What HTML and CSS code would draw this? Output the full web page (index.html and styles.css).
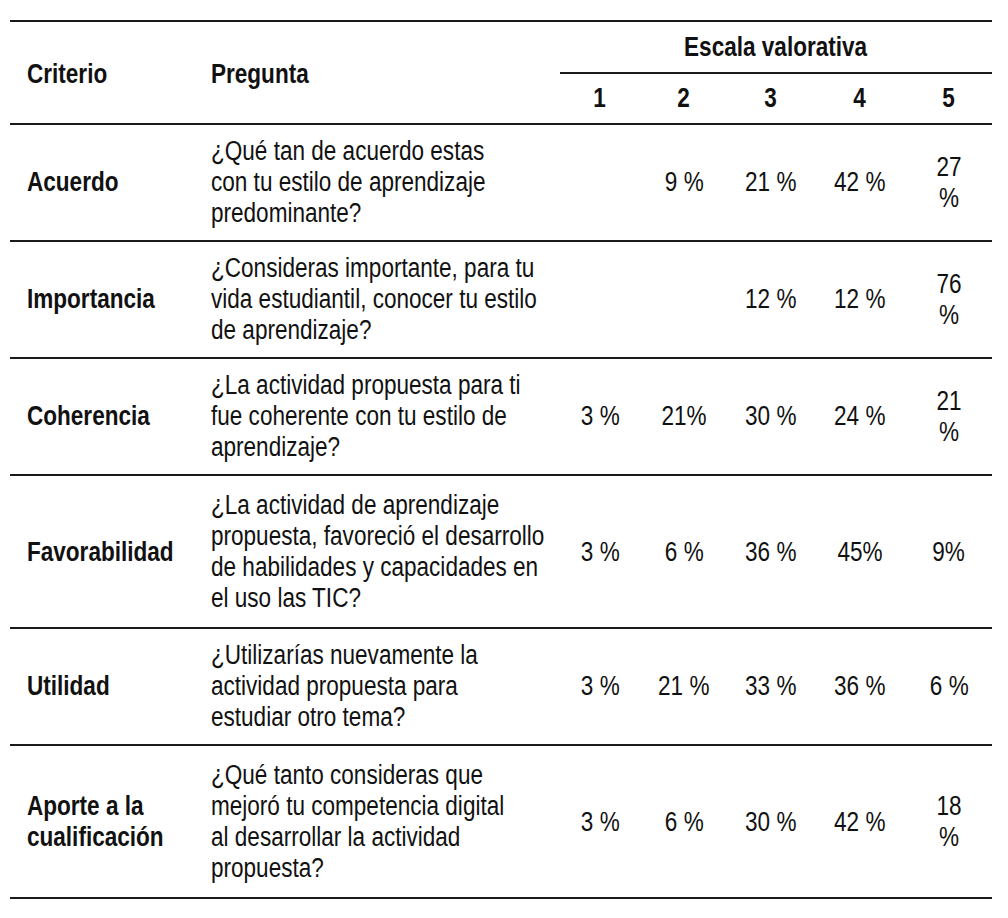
FILE: index.html
```html
<!DOCTYPE html>
<html lang="es">
<head>
<meta charset="utf-8">
<title>Escala valorativa</title>
<link rel="stylesheet" href="styles.css">
</head>
<body>
<table class="survey">
  <colgroup>
    <col class="col-crit">
    <col class="col-preg">
    <col class="col-n1">
    <col class="col-n2">
    <col class="col-n3">
    <col class="col-n4">
    <col class="col-n5">
  </colgroup>
  <thead>
    <tr class="head-top">
      <th rowspan="2" class="crit"><span class="t">Criterio</span></th>
      <th rowspan="2" class="preg"><span class="t">Pregunta</span></th>
      <th colspan="5" class="escala"><span class="t">Escala valorativa</span></th>
    </tr>
    <tr class="head-nums">
      <th class="num"><span class="t">1</span></th>
      <th class="num"><span class="t">2</span></th>
      <th class="num"><span class="t">3</span></th>
      <th class="num"><span class="t">4</span></th>
      <th class="num"><span class="t">5</span></th>
    </tr>
  </thead>
  <tbody>
    <tr>
      <th class="crit"><span class="t">Acuerdo</span></th>
      <td class="preg"><span class="t">¿Qué tan de acuerdo estas<br>con tu estilo de aprendizaje<br>predominante?</span></td>
      <td class="num"></td>
      <td class="num"><span class="t">9 %</span></td>
      <td class="num"><span class="t">21 %</span></td>
      <td class="num"><span class="t">42 %</span></td>
      <td class="num last"><span class="t">27 %</span></td>
    </tr>
    <tr>
      <th class="crit"><span class="t">Importancia</span></th>
      <td class="preg"><span class="t">¿Consideras importante, para tu<br>vida estudiantil, conocer tu estilo<br>de aprendizaje?</span></td>
      <td class="num"></td>
      <td class="num"></td>
      <td class="num"><span class="t">12 %</span></td>
      <td class="num"><span class="t">12 %</span></td>
      <td class="num last"><span class="t">76 %</span></td>
    </tr>
    <tr>
      <th class="crit"><span class="t">Coherencia</span></th>
      <td class="preg"><span class="t">¿La actividad propuesta para ti<br>fue coherente con tu estilo de<br>aprendizaje?</span></td>
      <td class="num"><span class="t">3 %</span></td>
      <td class="num"><span class="t">21%</span></td>
      <td class="num"><span class="t">30 %</span></td>
      <td class="num"><span class="t">24 %</span></td>
      <td class="num last"><span class="t">21 %</span></td>
    </tr>
    <tr class="tall">
      <th class="crit"><span class="t">Favorabilidad</span></th>
      <td class="preg"><span class="t">¿La actividad de aprendizaje<br>propuesta, favoreció el desarrollo<br>de habilidades y capacidades en<br>el uso las TIC?</span></td>
      <td class="num"><span class="t">3 %</span></td>
      <td class="num"><span class="t">6 %</span></td>
      <td class="num"><span class="t">36 %</span></td>
      <td class="num"><span class="t">45%</span></td>
      <td class="num last"><span class="t">9%</span></td>
    </tr>
    <tr>
      <th class="crit"><span class="t">Utilidad</span></th>
      <td class="preg"><span class="t">¿Utilizarías nuevamente la<br>actividad propuesta para<br>estudiar otro tema?</span></td>
      <td class="num"><span class="t">3 %</span></td>
      <td class="num"><span class="t">21 %</span></td>
      <td class="num"><span class="t">33 %</span></td>
      <td class="num"><span class="t">36 %</span></td>
      <td class="num last"><span class="t">6 %</span></td>
    </tr>
    <tr class="tall">
      <th class="crit"><span class="t">Aporte a la<br>cualificación</span></th>
      <td class="preg"><span class="t">¿Qué tanto consideras que<br>mejoró tu competencia digital<br>al desarrollar la actividad<br>propuesta?</span></td>
      <td class="num"><span class="t">3 %</span></td>
      <td class="num"><span class="t">6 %</span></td>
      <td class="num"><span class="t">30 %</span></td>
      <td class="num"><span class="t">42 %</span></td>
      <td class="num last"><span class="t">18 %</span></td>
    </tr>
  </tbody>
</table>
</body>
</html>
```

FILE: styles.css
```css
html, body {
  margin: 0;
  padding: 0;
  background: #ffffff;
}

body {
  font-family: "Liberation Sans", Arial, sans-serif;
  color: #111111;
  padding: 20px 16px 0 10px;
}

.survey {
  border-collapse: collapse;
  width: 982px;
  table-layout: fixed;
  font-size: 27px;
  line-height: 31px;
}

.col-crit { width: 190px; }
.col-preg { width: 360px; }
.col-n1 { width: 80px; }
.col-n2 { width: 88px; }
.col-n3 { width: 86px; }
.col-n4 { width: 92px; }
.col-n5 { width: 86px; }

.survey th,
.survey td {
  padding-top: 11px;
  padding-bottom: 11px;
  padding-left: 0;
  padding-right: 0;
  vertical-align: middle;
  white-space: nowrap;
}

/* narrow-face emulation: Arial Narrow proportions */
.survey .t {
  display: inline-block;
  transform: scaleX(0.835);
  transform-origin: 0 50%;
}

.survey .num .t,
.survey .escala .t {
  transform-origin: 50% 50%;
}

.survey .last .t {
  white-space: normal;
  max-width: 56px;
}

.survey thead .head-top th {
  border-top: 2px solid #1a1a1a;
}

.survey thead .escala {
  text-align: center;
  font-weight: bold;
  padding-top: 10px;
  padding-bottom: 9px;
  border-bottom: 2px solid #1a1a1a;
}

.survey thead .head-nums th {
  font-weight: bold;
  padding-top: 9px;
  padding-bottom: 9px;
  border-bottom: 2px solid #1a1a1a;
}

.survey thead .crit,
.survey thead .preg {
  border-bottom: 2px solid #1a1a1a;
  font-weight: bold;
  padding-top: 4px;
  padding-bottom: 0;
}

.survey .crit {
  text-align: left;
  font-weight: bold;
  padding-left: 17px;
}

.survey .preg {
  text-align: left;
  padding-left: 11px;
}

.survey .num {
  text-align: center;
}

.survey tbody tr {
  border-bottom: 2px solid #1a1a1a;
}

.survey tbody tr.tall th,
.survey tbody tr.tall td {
  padding-top: 14px;
  padding-bottom: 13px;
}
```
